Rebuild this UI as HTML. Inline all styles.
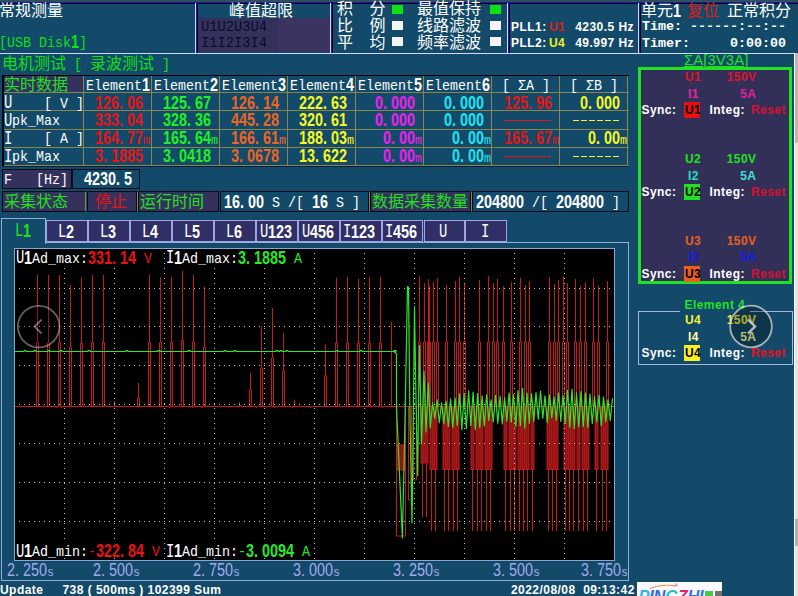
<!DOCTYPE html>
<html lang="zh"><head><meta charset="utf-8"><title>Power Analyzer</title>
<style>
html,body{margin:0;padding:0;background:#134a69;}
#scr{position:relative;width:798px;height:596px;overflow:hidden;background:#134a69;}
#scr div{position:absolute;}
.w{position:absolute;display:block;width:0;height:16px;}
.t{position:absolute;top:0;white-space:pre;line-height:16px;height:16px;transform-origin:0 0;}
.c{font-family:"Liberation Sans","Noto Sans CJK SC",sans-serif;font-size:16px;}
.d{font-family:"Liberation Sans",sans-serif;font-size:18px;font-weight:bold;transform:scaleX(.8);}
.k{font-family:"Liberation Mono",monospace;font-size:20px;transform:scaleX(.69);margin-top:.5px;}
.dn{font-family:"Liberation Sans",sans-serif;font-size:18px;transform:scaleX(.8);}
.m{font-family:"Liberation Mono",monospace;font-size:15px;transform:scaleX(.889);margin-top:2px;}
.u{font-family:"Liberation Mono",monospace;font-size:13px;transform:scaleX(.9);margin-top:2.8px;}
.u2{font-family:"Liberation Mono",monospace;font-size:15px;transform:scaleX(.889);margin-top:2px;}
.cn{position:absolute;white-space:pre;font-family:"Liberation Mono",monospace;font-size:13.75px;line-height:16px;color:#0a0a2c;}
.cb{position:absolute;white-space:pre;font-family:"Liberation Mono",monospace;font-weight:bold;font-size:13.33px;line-height:16px;color:#fff;}
.a{position:absolute;white-space:pre;font-family:"Liberation Sans",sans-serif;line-height:14px;letter-spacing:.45px;}
</style></head>
<body><div id="scr">
<div style="left:0px;top:0px;width:798px;height:2px;background:#2c4f63;"></div>
<div style="left:-2px;top:2px;width:198px;height:1px;background:#1818b0;"></div>
<div style="left:-1px;top:3px;width:197px;height:1px;background:#00000c;"></div>
<div style="left:-2px;top:2px;width:1px;height:52px;background:#1818b0;"></div>
<div style="left:-1px;top:3px;width:1px;height:50px;background:#00000c;"></div>
<div style="left:-2px;top:53px;width:198px;height:1px;background:#d0dcff;"></div>
<div style="left:195px;top:3px;width:1px;height:51px;background:#d0dcff;"></div>
<div style="left:196px;top:2px;width:135px;height:1px;background:#1818b0;"></div>
<div style="left:197px;top:3px;width:134px;height:1px;background:#00000c;"></div>
<div style="left:196px;top:2px;width:1px;height:52px;background:#1818b0;"></div>
<div style="left:197px;top:3px;width:1px;height:50px;background:#00000c;"></div>
<div style="left:196px;top:53px;width:135px;height:1px;background:#d0dcff;"></div>
<div style="left:330px;top:3px;width:1px;height:51px;background:#d0dcff;"></div>
<div style="left:331px;top:2px;width:177px;height:1px;background:#1818b0;"></div>
<div style="left:332px;top:3px;width:176px;height:1px;background:#00000c;"></div>
<div style="left:331px;top:2px;width:1px;height:52px;background:#1818b0;"></div>
<div style="left:332px;top:3px;width:1px;height:50px;background:#00000c;"></div>
<div style="left:331px;top:53px;width:177px;height:1px;background:#d0dcff;"></div>
<div style="left:507px;top:3px;width:1px;height:51px;background:#d0dcff;"></div>
<div style="left:508px;top:2px;width:131px;height:1px;background:#1818b0;"></div>
<div style="left:509px;top:3px;width:130px;height:1px;background:#00000c;"></div>
<div style="left:508px;top:2px;width:1px;height:52px;background:#1818b0;"></div>
<div style="left:509px;top:3px;width:1px;height:50px;background:#00000c;"></div>
<div style="left:508px;top:53px;width:131px;height:1px;background:#d0dcff;"></div>
<div style="left:638px;top:3px;width:1px;height:51px;background:#d0dcff;"></div>
<div style="left:639px;top:2px;width:162px;height:1px;background:#1818b0;"></div>
<div style="left:640px;top:3px;width:161px;height:1px;background:#00000c;"></div>
<div style="left:639px;top:2px;width:1px;height:52px;background:#1818b0;"></div>
<div style="left:640px;top:3px;width:1px;height:50px;background:#00000c;"></div>
<div style="left:639px;top:53px;width:162px;height:1px;background:#d0dcff;"></div>
<div style="left:800px;top:3px;width:1px;height:51px;background:#d0dcff;"></div>
<span class="w" style="left:-1px;top:3px;color:#ffffff"><span class="t c" style="left:0px">常规测量</span></span>
<span class="w" style="left:-1.5px;top:34px;color:#10e010"><span class="t m" style="left:0px">[USB </span><span class="t m" style="left:40px">Disk</span><span class="t d" style="left:72px">1</span><span class="t m" style="left:80px">]</span></span>
<span class="w" style="left:2px;top:55.5px;color:#10e010"><span class="t c" style="left:0px">电机测试 </span><span class="t m" style="left:72px">[ </span><span class="t c" style="left:88px">录波测试 </span><span class="t m" style="left:160px">]</span></span>
<span class="w" style="left:229px;top:2.5px;color:#ffffff"><span class="t c" style="left:0px">峰值超限</span></span>
<div style="left:198px;top:18px;width:132px;height:34px;background:#34325c;"></div>
<div style="left:278px;top:18px;width:52px;height:34px;background:#3c3460;"></div>
<span class="cn" style="left:201px;top:20px;">U1U2U3U4</span>
<span class="cn" style="left:201px;top:36px;">I1I2I3I4</span>
<span class="w" style="left:337px;top:1.2px;color:#ffffff"><span class="t c" style="left:0px">积</span></span>
<span class="w" style="left:369.5px;top:1.2px;color:#ffffff"><span class="t c" style="left:0px">分</span></span>
<span class="w" style="left:417px;top:1.2px;color:#ffffff"><span class="t c" style="left:0px">最值保持</span></span>
<span class="w" style="left:337px;top:17.9px;color:#ffffff"><span class="t c" style="left:0px">比</span></span>
<span class="w" style="left:369.5px;top:17.9px;color:#ffffff"><span class="t c" style="left:0px">例</span></span>
<span class="w" style="left:417px;top:17.9px;color:#ffffff"><span class="t c" style="left:0px">线路滤波</span></span>
<span class="w" style="left:337px;top:35.4px;color:#ffffff"><span class="t c" style="left:0px">平</span></span>
<span class="w" style="left:369.5px;top:35.4px;color:#ffffff"><span class="t c" style="left:0px">均</span></span>
<span class="w" style="left:417px;top:35.4px;color:#ffffff"><span class="t c" style="left:0px">频率滤波</span></span>
<div style="left:392px;top:4.5px;width:11px;height:9px;background:#10e010;"></div>
<div style="left:392px;top:21px;width:11px;height:9px;background:#f4f4f4;"></div>
<div style="left:392px;top:37px;width:11px;height:9px;background:#f4f4f4;"></div>
<div style="left:490px;top:4.5px;width:11px;height:9px;background:#10e010;"></div>
<div style="left:490px;top:21px;width:11px;height:9px;background:#f4f4f4;"></div>
<div style="left:490px;top:37px;width:11px;height:9px;background:#f4f4f4;"></div>
<span class="a" style="left:511px;top:20px;color:#ffffff;font-size:12px;font-weight:bold;">PLL1:</span>
<span class="a" style="left:549px;top:20px;color:#e01818;font-size:12px;font-weight:bold;">U1</span>
<span class="a" style="right:164px;top:20px;color:#ffffff;font-size:12px;font-weight:bold;">4230.5 Hz</span>
<span class="a" style="left:511px;top:36px;color:#ffffff;font-size:12px;font-weight:bold;">PLL2:</span>
<span class="a" style="left:549px;top:36px;color:#f0f020;font-size:12px;font-weight:bold;">U4</span>
<span class="a" style="right:164px;top:36px;color:#ffffff;font-size:12px;font-weight:bold;">49.997 Hz</span>
<span class="w" style="left:641px;top:3px;color:#ffffff"><span class="t c" style="left:0px">单元</span><span class="t d" style="left:32px">1</span></span>
<span class="w" style="left:687px;top:3px;color:#e01818"><span class="t c" style="left:0px">复位</span></span>
<span class="w" style="left:727px;top:3px;color:#ffffff"><span class="t c" style="left:0px">正常积分</span></span>
<span class="cb" style="left:642px;top:19px;">Time: ------:--:--</span>
<span class="cb" style="left:642px;top:36px;">Timer:     0:00:00</span>
<div style="left:3px;top:76px;width:80px;height:17px;background:#34325c;"></div>
<div style="left:3px;top:92.2px;width:625.5px;height:1px;background:#86864e;"></div>
<div style="left:3px;top:110.3px;width:625.5px;height:1px;background:#86864e;"></div>
<div style="left:3px;top:128.5px;width:625.5px;height:1px;background:#86864e;"></div>
<div style="left:3px;top:146.7px;width:625.5px;height:1px;background:#86864e;"></div>
<div style="left:3px;top:165.2px;width:625.5px;height:1px;background:#86864e;"></div>
<div style="left:82.5px;top:76px;width:1px;height:90px;background:#86864e;"></div>
<div style="left:150.6px;top:76px;width:1px;height:90px;background:#86864e;"></div>
<div style="left:218.7px;top:76px;width:1px;height:90px;background:#86864e;"></div>
<div style="left:286.8px;top:76px;width:1px;height:90px;background:#86864e;"></div>
<div style="left:354.9px;top:76px;width:1px;height:90px;background:#86864e;"></div>
<div style="left:423.0px;top:76px;width:1px;height:90px;background:#86864e;"></div>
<div style="left:491.1px;top:76px;width:1px;height:90px;background:#86864e;"></div>
<div style="left:559.2px;top:76px;width:1px;height:90px;background:#86864e;"></div>
<div style="left:627.3px;top:76px;width:1px;height:90px;background:#86864e;"></div>
<div style="left:2px;top:74.5px;width:626.5px;height:1.5px;background:#00000c;"></div>
<div style="left:2px;top:166.2px;width:626.5px;height:1px;background:#0c1c30;"></div>
<div style="left:2px;top:74.5px;width:1.5px;height:91.80000000000001px;background:#00000c;"></div>
<span class="w" style="left:4px;top:76.5px;color:#20e020"><span class="t c" style="left:0px">实时数据</span></span>
<span class="w" style="left:85.5px;top:76.5px;color:#ffffff"><span class="t m" style="left:0px">Element</span><span class="t d" style="left:56px">1</span></span>
<span class="w" style="left:153.6px;top:76.5px;color:#ffffff"><span class="t m" style="left:0px">Element</span><span class="t d" style="left:56px">2</span></span>
<span class="w" style="left:221.7px;top:76.5px;color:#ffffff"><span class="t m" style="left:0px">Element</span><span class="t d" style="left:56px">3</span></span>
<span class="w" style="left:289.8px;top:76.5px;color:#ffffff"><span class="t m" style="left:0px">Element</span><span class="t d" style="left:56px">4</span></span>
<span class="w" style="left:357.9px;top:76.5px;color:#ffffff"><span class="t m" style="left:0px">Element</span><span class="t d" style="left:56px">5</span></span>
<span class="w" style="left:426.0px;top:76.5px;color:#ffffff"><span class="t m" style="left:0px">Element</span><span class="t d" style="left:56px">6</span></span>
<span class="w" style="left:494.1px;top:76.5px;color:#ffffff"><span class="t m" style="left:0px"> </span><span class="t m" style="left:8px">[ </span><span class="t m" style="left:24px">ΣA </span><span class="t m" style="left:48px">]</span></span>
<span class="w" style="left:562.2px;top:76.5px;color:#ffffff"><span class="t m" style="left:0px"> </span><span class="t m" style="left:8px">[ </span><span class="t m" style="left:24px">ΣB </span><span class="t m" style="left:48px">]</span></span>
<span class="w" style="left:4px;top:94.6px;color:#ffffff"><span class="t k" style="left:0px">U    </span><span class="t m" style="left:40px">[ </span><span class="t m" style="left:56px">V </span><span class="t m" style="left:72px">]</span></span>
<span class="w" style="left:4px;top:112px;color:#ffffff"><span class="t k" style="left:0px">U</span><span class="t m" style="left:8px">pk_Max</span></span>
<span class="w" style="left:4px;top:130px;color:#ffffff"><span class="t k" style="left:0px">I    </span><span class="t m" style="left:40px">[ </span><span class="t m" style="left:56px">A </span><span class="t m" style="left:72px">]</span></span>
<span class="w" style="left:4px;top:148.2px;color:#ffffff"><span class="t k" style="left:0px">I</span><span class="t m" style="left:8px">pk_Max</span></span>
<span class="w" style="left:95.0px;top:94.6px;color:#e81414"><span class="t d" style="left:0px">126.</span><span class="t d" style="left:32px">06</span></span>
<span class="w" style="left:163.1px;top:94.6px;color:#20f020"><span class="t d" style="left:0px">125.</span><span class="t d" style="left:32px">67</span></span>
<span class="w" style="left:231.2px;top:94.6px;color:#f06422"><span class="t d" style="left:0px">126.</span><span class="t d" style="left:32px">14</span></span>
<span class="w" style="left:299.3px;top:94.6px;color:#f8f820"><span class="t d" style="left:0px">222.</span><span class="t d" style="left:32px">63</span></span>
<span class="w" style="left:375.4px;top:94.6px;color:#f020f0"><span class="t d" style="left:0px">0.</span><span class="t d" style="left:16px">000</span></span>
<span class="w" style="left:443.5px;top:94.6px;color:#20e4f4"><span class="t d" style="left:0px">0.</span><span class="t d" style="left:16px">000</span></span>
<span class="w" style="left:503.6px;top:94.6px;color:#e81414"><span class="t d" style="left:0px">125.</span><span class="t d" style="left:32px">96</span></span>
<span class="w" style="left:579.7px;top:94.6px;color:#f8f820"><span class="t d" style="left:0px">0.</span><span class="t d" style="left:16px">000</span></span>
<span class="w" style="left:95.0px;top:112px;color:#e81414"><span class="t d" style="left:0px">333.</span><span class="t d" style="left:32px">04</span></span>
<span class="w" style="left:163.1px;top:112px;color:#20f020"><span class="t d" style="left:0px">328.</span><span class="t d" style="left:32px">36</span></span>
<span class="w" style="left:231.2px;top:112px;color:#f06422"><span class="t d" style="left:0px">445.</span><span class="t d" style="left:32px">28</span></span>
<span class="w" style="left:299.3px;top:112px;color:#f8f820"><span class="t d" style="left:0px">320.</span><span class="t d" style="left:32px">61</span></span>
<span class="w" style="left:375.4px;top:112px;color:#f020f0"><span class="t d" style="left:0px">0.</span><span class="t d" style="left:16px">000</span></span>
<span class="w" style="left:443.5px;top:112px;color:#20e4f4"><span class="t d" style="left:0px">0.</span><span class="t d" style="left:16px">000</span></span>
<div style="left:503.6px;top:120px;width:47px;height:1px;background:#e81414;"></div>
<span class="t m" style="left:503.6px;top:112px;color:transparent">------</span>
<div style="left:572.7px;top:120px;width:6px;height:1px;background:#f8f820;"></div>
<div style="left:580.7px;top:120px;width:6px;height:1px;background:#f8f820;"></div>
<div style="left:588.7px;top:120px;width:6px;height:1px;background:#f8f820;"></div>
<div style="left:596.7px;top:120px;width:6px;height:1px;background:#f8f820;"></div>
<div style="left:604.7px;top:120px;width:6px;height:1px;background:#f8f820;"></div>
<div style="left:612.7px;top:120px;width:6px;height:1px;background:#f8f820;"></div>
<span class="t m" style="left:571.7px;top:112px;color:transparent">------</span>
<span class="w" style="left:95.0px;top:130px;color:#e81414"><span class="t d" style="left:0px">164.</span><span class="t d" style="left:32px">77</span></span>
<span class="t u" style="left:143.0px;top:130px;color:#e81414">m</span>
<span class="w" style="left:163.1px;top:130px;color:#20f020"><span class="t d" style="left:0px">165.</span><span class="t d" style="left:32px">64</span></span>
<span class="t u" style="left:211.1px;top:130px;color:#20f020">m</span>
<span class="w" style="left:231.2px;top:130px;color:#f06422"><span class="t d" style="left:0px">166.</span><span class="t d" style="left:32px">61</span></span>
<span class="t u" style="left:279.2px;top:130px;color:#f06422">m</span>
<span class="w" style="left:299.3px;top:130px;color:#f8f820"><span class="t d" style="left:0px">188.</span><span class="t d" style="left:32px">03</span></span>
<span class="t u" style="left:347.3px;top:130px;color:#f8f820">m</span>
<span class="w" style="left:383.4px;top:130px;color:#f020f0"><span class="t d" style="left:0px">0.</span><span class="t d" style="left:16px">00</span></span>
<span class="t u" style="left:415.4px;top:130px;color:#f020f0">m</span>
<span class="w" style="left:451.5px;top:130px;color:#20e4f4"><span class="t d" style="left:0px">0.</span><span class="t d" style="left:16px">00</span></span>
<span class="t u" style="left:483.5px;top:130px;color:#20e4f4">m</span>
<span class="w" style="left:503.6px;top:130px;color:#e81414"><span class="t d" style="left:0px">165.</span><span class="t d" style="left:32px">67</span></span>
<span class="t u" style="left:551.6px;top:130px;color:#e81414">m</span>
<span class="w" style="left:587.7px;top:130px;color:#f8f820"><span class="t d" style="left:0px">0.</span><span class="t d" style="left:16px">00</span></span>
<span class="t u" style="left:619.7px;top:130px;color:#f8f820">m</span>
<span class="w" style="left:95.0px;top:148.2px;color:#e81414"><span class="t d" style="left:0px">3.</span><span class="t d" style="left:16px">1885</span></span>
<span class="w" style="left:163.1px;top:148.2px;color:#20f020"><span class="t d" style="left:0px">3.</span><span class="t d" style="left:16px">0418</span></span>
<span class="w" style="left:231.2px;top:148.2px;color:#f06422"><span class="t d" style="left:0px">3.</span><span class="t d" style="left:16px">0678</span></span>
<span class="w" style="left:299.3px;top:148.2px;color:#f8f820"><span class="t d" style="left:0px">13.</span><span class="t d" style="left:24px">622</span></span>
<span class="w" style="left:383.4px;top:148.2px;color:#f020f0"><span class="t d" style="left:0px">0.</span><span class="t d" style="left:16px">00</span></span>
<span class="t u" style="left:415.4px;top:148.2px;color:#f020f0">m</span>
<span class="w" style="left:451.5px;top:148.2px;color:#20e4f4"><span class="t d" style="left:0px">0.</span><span class="t d" style="left:16px">00</span></span>
<span class="t u" style="left:483.5px;top:148.2px;color:#20e4f4">m</span>
<div style="left:503.6px;top:156.2px;width:47px;height:1px;background:#e81414;"></div>
<span class="t m" style="left:503.6px;top:148.2px;color:transparent">------</span>
<div style="left:572.7px;top:156.2px;width:6px;height:1px;background:#f8f820;"></div>
<div style="left:580.7px;top:156.2px;width:6px;height:1px;background:#f8f820;"></div>
<div style="left:588.7px;top:156.2px;width:6px;height:1px;background:#f8f820;"></div>
<div style="left:596.7px;top:156.2px;width:6px;height:1px;background:#f8f820;"></div>
<div style="left:604.7px;top:156.2px;width:6px;height:1px;background:#f8f820;"></div>
<div style="left:612.7px;top:156.2px;width:6px;height:1px;background:#f8f820;"></div>
<span class="t m" style="left:571.7px;top:148.2px;color:transparent">------</span>
<div style="left:2px;top:169px;width:69.5px;height:19.5px;background:#050c18;"></div>
<div style="left:3px;top:170px;width:67.5px;height:17.5px;background:#34325c;"></div>
<div style="left:71.5px;top:169px;width:68px;height:19.5px;background:#050c18;"></div>
<div style="left:72.5px;top:170px;width:66px;height:17.5px;background:#134a69;"></div>
<span class="w" style="left:4px;top:171px;color:#ffffff"><span class="t m" style="left:0px">F   </span><span class="t m" style="left:32px">[Hz]</span></span>
<span class="w" style="left:84px;top:171px;color:#ffffff"><span class="t d" style="left:0px">4230.</span><span class="t d" style="left:40px">5</span></span>
<div style="left:2px;top:191px;width:83.5px;height:20.5px;background:#050c18;"></div>
<div style="left:3px;top:192px;width:81.5px;height:18.5px;background:#34325c;"></div>
<div style="left:86.5px;top:191px;width:50.5px;height:20.5px;background:#050c18;"></div>
<div style="left:87.5px;top:192px;width:48.5px;height:18.5px;background:#34325c;"></div>
<div style="left:138px;top:191px;width:80.5px;height:20.5px;background:#050c18;"></div>
<div style="left:139px;top:192px;width:78.5px;height:18.5px;background:#34325c;"></div>
<div style="left:219.5px;top:191px;width:149px;height:20.5px;background:#050c18;"></div>
<div style="left:220.5px;top:192px;width:147px;height:18.5px;background:#134a69;"></div>
<div style="left:369.5px;top:191px;width:101px;height:20.5px;background:#050c18;"></div>
<div style="left:370.5px;top:192px;width:99px;height:18.5px;background:#34325c;"></div>
<div style="left:471.5px;top:191px;width:157px;height:20.5px;background:#050c18;"></div>
<div style="left:472.5px;top:192px;width:155px;height:18.5px;background:#134a69;"></div>
<div style="left:85.3px;top:192px;width:1px;height:19px;background:#86864e;"></div>
<div style="left:137px;top:192px;width:1px;height:19px;background:#86864e;"></div>
<div style="left:368.7px;top:192px;width:1px;height:19px;background:#86864e;"></div>
<div style="left:470.5px;top:192px;width:1px;height:19px;background:#86864e;"></div>
<span class="w" style="left:4px;top:193.5px;color:#20e020"><span class="t c" style="left:0px">采集状态</span></span>
<span class="w" style="left:95px;top:193.5px;color:#e81414"><span class="t c" style="left:0px">停止</span></span>
<span class="w" style="left:140px;top:193.5px;color:#20e020"><span class="t c" style="left:0px">运行时间</span></span>
<span class="w" style="left:224px;top:193.5px;color:#ffffff"><span class="t d" style="left:0px">16.</span><span class="t d" style="left:24px">00 </span><span class="t m" style="left:48px">S </span><span class="t m" style="left:64px">/[ </span><span class="t d" style="left:88px">16 </span><span class="t m" style="left:112px">S </span><span class="t m" style="left:128px">]</span></span>
<span class="w" style="left:372px;top:193.5px;color:#20e020"><span class="t c" style="left:0px">数据采集数量</span></span>
<span class="w" style="left:476px;top:193.5px;color:#ffffff"><span class="t d" style="left:0px">204800 </span><span class="t m" style="left:56px">/[ </span><span class="t d" style="left:80px">204800 </span><span class="t m" style="left:136px">]</span></span>
<div style="left:1px;top:242px;width:628px;height:338.5px;background:#8fb0dc;"></div>
<div style="left:2px;top:243px;width:626px;height:336.5px;background:#134a69;"></div>
<div style="left:1px;top:218px;width:45.4px;height:26px;background:#8fb0dc;"></div>
<div style="left:2px;top:219px;width:43.4px;height:26px;background:#134a69;"></div>
<span class="w" style="left:14.5px;top:222.5px;color:#20e020"><span class="t k" style="left:0px">L</span><span class="t d" style="left:8px">1</span></span>
<div style="left:46.4px;top:220px;width:41.9px;height:22px;background:#a0a4e6;"></div>
<div style="left:47.4px;top:221px;width:39.9px;height:20px;background:#313066;"></div>
<span class="w" style="left:58.1px;top:223.5px;color:#ffffff"><span class="t k" style="left:0px">L</span><span class="t d" style="left:8px">2</span></span>
<div style="left:88.3px;top:220px;width:41.89999999999999px;height:22px;background:#a0a4e6;"></div>
<div style="left:89.3px;top:221px;width:39.89999999999999px;height:20px;background:#313066;"></div>
<span class="w" style="left:100.0px;top:223.5px;color:#ffffff"><span class="t k" style="left:0px">L</span><span class="t d" style="left:8px">3</span></span>
<div style="left:130.2px;top:220px;width:41.900000000000006px;height:22px;background:#a0a4e6;"></div>
<div style="left:131.2px;top:221px;width:39.900000000000006px;height:20px;background:#313066;"></div>
<span class="w" style="left:141.9px;top:223.5px;color:#ffffff"><span class="t k" style="left:0px">L</span><span class="t d" style="left:8px">4</span></span>
<div style="left:172.1px;top:220px;width:41.900000000000006px;height:22px;background:#a0a4e6;"></div>
<div style="left:173.1px;top:221px;width:39.900000000000006px;height:20px;background:#313066;"></div>
<span class="w" style="left:183.9px;top:223.5px;color:#ffffff"><span class="t k" style="left:0px">L</span><span class="t d" style="left:8px">5</span></span>
<div style="left:214.0px;top:220px;width:41.900000000000006px;height:22px;background:#a0a4e6;"></div>
<div style="left:215.0px;top:221px;width:39.900000000000006px;height:20px;background:#313066;"></div>
<span class="w" style="left:225.8px;top:223.5px;color:#ffffff"><span class="t k" style="left:0px">L</span><span class="t d" style="left:8px">6</span></span>
<div style="left:255.9px;top:220px;width:41.900000000000006px;height:22px;background:#a0a4e6;"></div>
<div style="left:256.9px;top:221px;width:39.900000000000006px;height:20px;background:#313066;"></div>
<span class="w" style="left:259.7px;top:223.5px;color:#ffffff"><span class="t k" style="left:0px">U</span><span class="t d" style="left:8px">123</span></span>
<div style="left:297.8px;top:220px;width:41.89999999999998px;height:22px;background:#a0a4e6;"></div>
<div style="left:298.8px;top:221px;width:39.89999999999998px;height:20px;background:#313066;"></div>
<span class="w" style="left:301.6px;top:223.5px;color:#ffffff"><span class="t k" style="left:0px">U</span><span class="t d" style="left:8px">456</span></span>
<div style="left:339.7px;top:220px;width:41.900000000000034px;height:22px;background:#a0a4e6;"></div>
<div style="left:340.7px;top:221px;width:39.900000000000034px;height:20px;background:#313066;"></div>
<span class="w" style="left:343.4px;top:223.5px;color:#ffffff"><span class="t k" style="left:0px">I</span><span class="t d" style="left:8px">123</span></span>
<div style="left:381.6px;top:220px;width:41.89999999999998px;height:22px;background:#a0a4e6;"></div>
<div style="left:382.6px;top:221px;width:39.89999999999998px;height:20px;background:#313066;"></div>
<span class="w" style="left:385.4px;top:223.5px;color:#ffffff"><span class="t k" style="left:0px">I</span><span class="t d" style="left:8px">456</span></span>
<div style="left:423.5px;top:220px;width:41.89999999999998px;height:22px;background:#a0a4e6;"></div>
<div style="left:424.5px;top:221px;width:39.89999999999998px;height:20px;background:#313066;"></div>
<span class="w" style="left:439.2px;top:223.5px;color:#ffffff"><span class="t k" style="left:0px">U</span></span>
<div style="left:465.4px;top:220px;width:41.900000000000034px;height:22px;background:#a0a4e6;"></div>
<div style="left:466.4px;top:221px;width:39.900000000000034px;height:20px;background:#313066;"></div>
<span class="w" style="left:481.2px;top:223.5px;color:#ffffff"><span class="t k" style="left:0px">I</span></span>
<div style="left:14px;top:248px;width:601px;height:313px;background:#84a8d8;"></div>
<div style="left:15px;top:249px;width:599px;height:311px;background:#000000;"></div>
<svg style="position:absolute;left:0;top:0" width="798" height="596" viewBox="0 0 798 596"><defs><clipPath id="cp"><rect x="15" y="249" width="599" height="311"/></clipPath></defs><g clip-path="url(#cp)"><rect x="397.0" y="445.0" width="8" height="25.0" fill="#8c1414" stroke="#c41c1c" stroke-width="1"/><rect x="421.0" y="406.5" width="3" height="56.5" fill="#8c1414" stroke="#c41c1c" stroke-width="1"/><rect x="425.0" y="406.5" width="3" height="56.5" fill="#8c1414" stroke="#c41c1c" stroke-width="1"/><rect x="430.0" y="406.5" width="3" height="63.0" fill="#8c1414" stroke="#c41c1c" stroke-width="1"/><rect x="434.0" y="406.5" width="3" height="63.0" fill="#8c1414" stroke="#c41c1c" stroke-width="1"/><rect x="443.0" y="406.5" width="3" height="63.0" fill="#8c1414" stroke="#c41c1c" stroke-width="1"/><rect x="447.0" y="406.5" width="3" height="63.0" fill="#8c1414" stroke="#c41c1c" stroke-width="1"/><rect x="452.0" y="406.5" width="3" height="63.0" fill="#8c1414" stroke="#c41c1c" stroke-width="1"/><rect x="456.0" y="406.5" width="3" height="63.0" fill="#8c1414" stroke="#c41c1c" stroke-width="1"/><rect x="471.0" y="406.5" width="3" height="63.0" fill="#8c1414" stroke="#c41c1c" stroke-width="1"/><rect x="476.0" y="406.5" width="3" height="63.0" fill="#8c1414" stroke="#c41c1c" stroke-width="1"/><rect x="480.0" y="406.5" width="3" height="63.0" fill="#8c1414" stroke="#c41c1c" stroke-width="1"/><rect x="485.0" y="406.5" width="3" height="63.0" fill="#8c1414" stroke="#c41c1c" stroke-width="1"/><rect x="489.0" y="406.5" width="3" height="63.0" fill="#8c1414" stroke="#c41c1c" stroke-width="1"/><rect x="504.0" y="406.5" width="3" height="63.0" fill="#8c1414" stroke="#c41c1c" stroke-width="1"/><rect x="509.0" y="406.5" width="3" height="63.0" fill="#8c1414" stroke="#c41c1c" stroke-width="1"/><rect x="513.0" y="406.5" width="3" height="63.0" fill="#8c1414" stroke="#c41c1c" stroke-width="1"/><rect x="518.0" y="406.5" width="3" height="63.0" fill="#8c1414" stroke="#c41c1c" stroke-width="1"/><rect x="522.0" y="406.5" width="3" height="63.0" fill="#8c1414" stroke="#c41c1c" stroke-width="1"/><rect x="526.0" y="406.5" width="3" height="63.0" fill="#8c1414" stroke="#c41c1c" stroke-width="1"/><rect x="531.0" y="406.5" width="3" height="63.0" fill="#8c1414" stroke="#c41c1c" stroke-width="1"/><rect x="547.0" y="406.5" width="3" height="63.0" fill="#8c1414" stroke="#c41c1c" stroke-width="1"/><rect x="551.0" y="406.5" width="3" height="63.0" fill="#8c1414" stroke="#c41c1c" stroke-width="1"/><rect x="555.0" y="406.5" width="3" height="63.0" fill="#8c1414" stroke="#c41c1c" stroke-width="1"/><rect x="564.0" y="406.5" width="3" height="63.0" fill="#8c1414" stroke="#c41c1c" stroke-width="1"/><rect x="568.0" y="406.5" width="3" height="63.0" fill="#8c1414" stroke="#c41c1c" stroke-width="1"/><rect x="572.0" y="406.5" width="3" height="63.0" fill="#8c1414" stroke="#c41c1c" stroke-width="1"/><rect x="577.0" y="406.5" width="3" height="63.0" fill="#8c1414" stroke="#c41c1c" stroke-width="1"/><rect x="582.0" y="406.5" width="3" height="63.0" fill="#8c1414" stroke="#c41c1c" stroke-width="1"/><rect x="586.0" y="406.5" width="3" height="63.0" fill="#8c1414" stroke="#c41c1c" stroke-width="1"/><rect x="595.0" y="406.5" width="3" height="63.0" fill="#8c1414" stroke="#c41c1c" stroke-width="1"/><rect x="601.0" y="406.5" width="3" height="63.0" fill="#8c1414" stroke="#c41c1c" stroke-width="1"/><rect x="605.0" y="406.5" width="3" height="63.0" fill="#8c1414" stroke="#c41c1c" stroke-width="1"/><path d="M37.5 275.0V342.5M36.5 406.5V342.5H38.5V406.5M48.5 275.0V342.5M47.5 406.5V342.5H49.5V406.5M59.5 275.0V342.5M58.5 406.5V342.5H60.5V406.5M70.5 285.0V347.0M69.5 406.5V347.0H71.5V406.5M81.5 277.6V343.0M80.5 406.5V343.0H82.5V406.5M92.5 275.0V342.5M91.5 406.5V342.5H93.5V406.5M103.5 275.0V342.5M102.5 406.5V342.5H104.5V406.5M114.5 401.0V406.5M138.5 383.0V398.0M137.5 406.5V398.0H139.5V406.5M149.5 275.0V342.5M148.5 406.5V342.5H150.5V406.5M160.5 277.0V342.5M159.5 406.5V342.5H161.5V406.5M171.5 277.0V342.5M170.5 406.5V342.5H172.5V406.5M182.5 271.0V340.5M181.5 406.5V340.5H183.5V406.5M193.5 275.0V342.5M192.5 406.5V342.5H194.5V406.5M204.5 286.4V347.0M203.5 406.5V347.0H205.5V406.5M239.5 402.0V406.5M250.5 373.0V389.6M249.5 406.5V389.6H251.5V406.5M261.5 326.7V368.0M260.5 406.5V368.0H262.5V406.5M272.5 307.8V358.0M271.5 406.5V358.0H273.5V406.5M283.5 333.0V370.7M282.5 406.5V370.7H284.5V406.5M294.5 399.6V406.5M325.5 344.3V375.7M324.5 406.5V375.7H326.5V406.5M336.5 277.6V343.0M335.5 406.5V343.0H337.5V406.5M347.5 277.0V343.0M346.5 406.5V343.0H348.5V406.5M358.5 279.0V343.0M357.5 406.5V343.0H359.5V406.5M369.5 277.0V343.0M368.5 406.5V343.0H370.5V406.5M380.5 277.0V343.0M379.5 406.5V343.0H381.5V406.5M391.5 321.6V406.5M14 406.5H23H34H39H44H49H56v1h1v0V406.5H61v1h1v0V406.5H66H71H82v-1h1v0V406.5H89v-1h1v0V406.5H98H105v-1h1v0V406.5H110H115H122H133H144H155H162H169v1h1v0V406.5H178H187H192v1h1v0V406.5H201v1h1v0V406.5H206H211H220H229H240v-1h1v0V406.5H251H256v1h1v0V406.5H265H274v1h1v0V406.5H281H292v1h1v0V406.5H299H310v1h1v0V406.5H319H330H339H348H359H366v-1h1v0V406.5H373v-1h1v0V406.5H382v1h1v0V406.5H391H396H407H615M396.5 406.5V536H405.5V406.5M408.5 406.5V500H411.5V406.5M413.5 406.5V480H416.5V406.5M419.5 276.0V342.0M418.5 406.5V342H420.5V406.5M424.5 283.0V342.0M423.5 406.5V342H425.5V406.5M428.5 279.0V342.0M427.5 406.5V342H429.5V406.5M429.5 286.0V342.0M428.5 406.5V342H430.5V406.5M433.5 282.0V342.0M432.5 406.5V342H434.5V406.5M437.5 278.0V342.0M436.5 406.5V342H438.5V406.5M446.5 285.0V342.0M445.5 406.5V342H447.5V406.5M455.5 281.0V342.0M454.5 406.5V342H456.5V406.5M459.5 277.0V342.0M458.5 406.5V342H460.5V406.5M464.5 284.0V342.0M463.5 406.5V342H465.5V406.5M479.5 280.0V342.0M478.5 406.5V342H480.5V406.5M488.5 276.0V342.0M487.5 406.5V342H489.5V406.5M493.5 283.0V342.0M492.5 406.5V342H494.5V406.5M497.5 279.0V342.0M496.5 406.5V342H498.5V406.5M503.5 286.0V342.0M502.5 406.5V342H504.5V406.5M511.5 282.0V342.0M510.5 406.5V342H512.5V406.5M520.5 278.0V342.0M519.5 406.5V342H521.5V406.5M525.5 285.0V342.0M524.5 406.5V342H526.5V406.5M529.5 281.0V342.0M528.5 406.5V342H530.5V406.5M549.5 277.0V342.0M548.5 406.5V342H550.5V406.5M554.5 284.0V342.0M553.5 406.5V342H555.5V406.5M558.5 280.0V342.0M557.5 406.5V342H559.5V406.5M563.5 276.0V342.0M562.5 406.5V342H564.5V406.5M567.5 283.0V342.0M566.5 406.5V342H568.5V406.5M575.5 279.0V342.0M574.5 406.5V342H576.5V406.5M580.5 286.0V342.0M579.5 406.5V342H581.5V406.5M585.5 282.0V342.0M584.5 406.5V342H586.5V406.5M593.5 278.0V342.0M592.5 406.5V342H594.5V406.5M598.5 285.0V342.0M597.5 406.5V342H599.5V406.5M607.5 281.0V342.0M606.5 406.5V342H608.5V406.5M422.5 463.0V517.0M426.5 463.0V517.0M431.5 469.5V531.0M435.5 469.5V531.0M444.5 469.5V531.0M448.5 469.5V531.0M453.5 469.5V531.0M457.5 469.5V531.0M472.5 469.5V531.0M477.5 469.5V531.0M481.5 469.5V531.0M486.5 469.5V531.0M490.5 469.5V531.0M505.5 469.5V531.0M510.5 469.5V531.0M514.5 469.5V531.0M519.5 469.5V531.0M523.5 469.5V531.0M527.5 469.5V531.0M532.5 469.5V531.0M548.5 469.5V531.0M552.5 469.5V531.0M556.5 469.5V531.0M565.5 469.5V531.0M569.5 469.5V531.0M573.5 469.5V531.0M578.5 469.5V531.0M583.5 469.5V531.0M587.5 469.5V531.0M596.5 469.5V531.0M602.5 469.5V531.0M606.5 469.5V531.0" fill="none" stroke="#c41c1c" stroke-width="1"/><path d="M64.5 248V560" stroke="#c0c0c0" stroke-width="1" stroke-dasharray="1 4" fill="none"/><path d="M114.5 248V560" stroke="#c0c0c0" stroke-width="1" stroke-dasharray="1 4" fill="none"/><path d="M164.5 248V560" stroke="#c0c0c0" stroke-width="1" stroke-dasharray="1 4" fill="none"/><path d="M214.5 248V560" stroke="#c0c0c0" stroke-width="1" stroke-dasharray="1 4" fill="none"/><path d="M264.5 248V560" stroke="#c0c0c0" stroke-width="1" stroke-dasharray="1 4" fill="none"/><path d="M314.5 248V560" stroke="#c0c0c0" stroke-width="1" stroke-dasharray="1 4" fill="none"/><path d="M364.5 248V560" stroke="#c0c0c0" stroke-width="1" stroke-dasharray="1 4" fill="none"/><path d="M414.5 248V560" stroke="#c0c0c0" stroke-width="1" stroke-dasharray="1 4" fill="none"/><path d="M464.5 248V560" stroke="#c0c0c0" stroke-width="1" stroke-dasharray="1 4" fill="none"/><path d="M514.5 248V560" stroke="#c0c0c0" stroke-width="1" stroke-dasharray="1 4" fill="none"/><path d="M564.5 248V560" stroke="#c0c0c0" stroke-width="1" stroke-dasharray="1 4" fill="none"/><path d="M14 288.5H614" stroke="#c0c0c0" stroke-width="1" stroke-dasharray="1 4" fill="none"/><path d="M14 326.5H614" stroke="#c0c0c0" stroke-width="1" stroke-dasharray="1 4" fill="none"/><path d="M14 365.5H614" stroke="#c0c0c0" stroke-width="1" stroke-dasharray="1 4" fill="none"/><path d="M14 404.5H614" stroke="#c0c0c0" stroke-width="1" stroke-dasharray="1 4" fill="none"/><path d="M14 443.5H614" stroke="#c0c0c0" stroke-width="1" stroke-dasharray="1 4" fill="none"/><path d="M14 482.5H614" stroke="#c0c0c0" stroke-width="1" stroke-dasharray="1 4" fill="none"/><path d="M14 521.5H614" stroke="#c0c0c0" stroke-width="1" stroke-dasharray="1 4" fill="none"/><path d="M14 351.5H24v-1h2v1H34v-1h2v1H38H48v-1h2v1H56H60v-1h2v1H66H74H78H88v-1h2v1H96H104H108H118H126v-1h2v1H130H138H144H150H158v-1h2v1H162H170H174H182H188v-1h2v1H194H202H208H218H224v-1h2v1H234v-1h2v1H238H246H252H260H268H276v-1h2v1H280v-1h2v1H286v-1h2v1H296H300H308H312H316H322H328H336v-1h2v1H346H350H356H360v-1h2v1H370H376H386H394v-1h2v1H394 L396.5 354 V407 L402.4 538 L405 420 L407.5 286.5 L408.5 287 L410 420 L412 523 L413.5 400 L414.5 306.5 L416 400 L417.7 475.5 L418.6 400 L419.5 345.6 L421.5 444 L424 371 L426 432 L428.3 383 L430.3 428L432.6 402.5L434.8 418.4L437.1 399.9L439.3 422.8L441.6 402.8L443.8 423.7L446.1 401.0L448.3 426.5L450.6 398.9L452.8 427.5L455.1 398.2L457.3 425.1L459.6 393.9L461.8 429.6L464.1 394.1L466.3 428.7L468.6 390.9L470.8 425.5L473.1 392.0L475.3 429.5L477.6 393.6L479.8 427.5L482.1 395.8L484.3 426.0L486.6 394.7L488.8 420.4L491.1 399.8L493.3 421.9L495.6 395.4L497.8 423.3L500.1 396.2L502.3 423.9L504.6 397.6L506.8 421.1L509.1 393.0L511.3 422.1L513.5 394.7L515.8 426.5L518.0 390.5L520.3 425.9L522.5 388.4L524.8 428.1L527.0 392.8L529.3 423.2L531.5 393.6L533.8 421.3L536.0 392.5L538.3 419.3L540.5 391.2L542.8 418.1L545.0 395.9L547.3 422.7L549.5 394.9L551.8 417.8L554.0 396.9L556.3 420.3L558.5 393.1L560.8 421.5L563.0 395.4L565.3 423.3L567.5 390.4L569.8 427.4L572.0 389.1L574.3 428.6L576.5 392.9L578.8 426.7L581.0 391.7L583.3 426.4L585.5 393.2L587.8 427.5L590.0 394.0L592.3 423.6L594.5 396.4L596.8 421.8L599.0 395.2L601.3 425.7L603.5 397.1L605.8 421.7L608.0 399.9L610.3 420.4L612.5 398.3" fill="none" stroke="#2ce62c" stroke-width="1.2" stroke-linejoin="round"/></g></svg>
<div style="left:15.5px;top:249.5px;width:72px;height:15px;background:#000;"></div>
<span class="w" style="left:15.5px;top:249.5px;color:#ffffff"><span class="t k" style="left:0px">U</span><span class="t d" style="left:8px">1</span><span class="t m" style="left:16px">Ad_max:</span></span>
<div style="left:87.5px;top:249.5px;width:48px;height:15px;background:#000;"></div>
<span class="w" style="left:87.5px;top:249.5px;color:#e81414"><span class="t d" style="left:0px">331.</span><span class="t d" style="left:32px">14</span></span>
<span class="t u2" style="left:143.5px;top:249.5px;color:#e81414">V</span>
<div style="left:166px;top:249.5px;width:72px;height:15px;background:#000;"></div>
<span class="w" style="left:166px;top:249.5px;color:#ffffff"><span class="t k" style="left:0px">I</span><span class="t d" style="left:8px">1</span><span class="t m" style="left:16px">Ad_max:</span></span>
<div style="left:238px;top:249.5px;width:48px;height:15px;background:#000;"></div>
<span class="w" style="left:238px;top:249.5px;color:#2ce62c"><span class="t d" style="left:0px">3.</span><span class="t d" style="left:16px">1885</span></span>
<span class="t u2" style="left:294px;top:249.5px;color:#2ce62c">A</span>
<div style="left:15.5px;top:543px;width:72px;height:15px;background:#000;"></div>
<span class="w" style="left:15.5px;top:543px;color:#ffffff"><span class="t k" style="left:0px">U</span><span class="t d" style="left:8px">1</span><span class="t m" style="left:16px">Ad_min:</span></span>
<div style="left:87.5px;top:543px;width:56px;height:15px;background:#000;"></div>
<span class="w" style="left:87.5px;top:543px;color:#e81414"><span class="t m" style="left:0px">-</span><span class="t d" style="left:8px">322.</span><span class="t d" style="left:40px">84</span></span>
<span class="t u2" style="left:151.5px;top:543px;color:#e81414">V</span>
<div style="left:166px;top:543px;width:72px;height:15px;background:#000;"></div>
<span class="w" style="left:166px;top:543px;color:#ffffff"><span class="t k" style="left:0px">I</span><span class="t d" style="left:8px">1</span><span class="t m" style="left:16px">Ad_min:</span></span>
<div style="left:238px;top:543px;width:56px;height:15px;background:#000;"></div>
<span class="w" style="left:238px;top:543px;color:#2ce62c"><span class="t m" style="left:0px">-</span><span class="t d" style="left:8px">3.</span><span class="t d" style="left:24px">0094</span></span>
<span class="t u2" style="left:302px;top:543px;color:#2ce62c">A</span>
<span class="w" style="left:7px;top:562px;color:#a2aaec"><span class="t dn" style="left:0px">2.</span><span class="t dn" style="left:16px">250</span></span>
<span class="t u" style="left:47px;top:562px;color:#a2aaec">s</span>
<span class="w" style="left:93px;top:562px;color:#a2aaec"><span class="t dn" style="left:0px">2.</span><span class="t dn" style="left:16px">500</span></span>
<span class="t u" style="left:133px;top:562px;color:#a2aaec">s</span>
<span class="w" style="left:193px;top:562px;color:#a2aaec"><span class="t dn" style="left:0px">2.</span><span class="t dn" style="left:16px">750</span></span>
<span class="t u" style="left:233px;top:562px;color:#a2aaec">s</span>
<span class="w" style="left:293px;top:562px;color:#a2aaec"><span class="t dn" style="left:0px">3.</span><span class="t dn" style="left:16px">000</span></span>
<span class="t u" style="left:333px;top:562px;color:#a2aaec">s</span>
<span class="w" style="left:393px;top:562px;color:#a2aaec"><span class="t dn" style="left:0px">3.</span><span class="t dn" style="left:16px">250</span></span>
<span class="t u" style="left:433px;top:562px;color:#a2aaec">s</span>
<span class="w" style="left:493px;top:562px;color:#a2aaec"><span class="t dn" style="left:0px">3.</span><span class="t dn" style="left:16px">500</span></span>
<span class="t u" style="left:533px;top:562px;color:#a2aaec">s</span>
<span class="w" style="left:581px;top:562px;color:#a2aaec"><span class="t dn" style="left:0px">3.</span><span class="t dn" style="left:16px">750</span></span>
<span class="t u" style="left:621px;top:562px;color:#a2aaec">s</span>
<span class="a" style="left:0px;top:583px;color:#ffffff;font-size:12px;font-weight:bold;">Update</span>
<span class="a" style="left:62.5px;top:583px;color:#ffffff;font-size:12px;font-weight:bold;">738 ( 500ms ) 102399 Sum</span>
<span class="a" style="left:511px;top:583px;color:#ffffff;font-size:12px;font-weight:bold;">2022/08/08&nbsp; 09:13:42</span>
<div style="left:637px;top:582px;width:85px;height:14px;background:#fbfbff;overflow:hidden"><span style="position:absolute;left:1.5px;top:6.2px;font:italic bold 16.5px/16px 'Liberation Sans',sans-serif;letter-spacing:-0.3px;white-space:pre"><span style="color:#38b4e4">P</span><span style="color:#3468e0">I</span><span style="color:#3468e0">N</span><span style="color:#24c0c4">G</span><span style="color:#e0246c">Z</span><span style="color:#3474e0">H</span><span style="color:#3474e0">I</span></span><div style="position:absolute;left:68px;top:8.5px;width:8px;height:6px;background:#48c848"></div><div style="position:absolute;left:78px;top:9px;width:7px;height:5px;background:#707070"></div><svg style="position:absolute;left:0;top:0" width="85" height="14" viewBox="0 0 85 14"><path d="M13 6.5Q26 1.5 39 4" fill="none" stroke="#e88a3c" stroke-width="1"/><path d="M38 4.5L40.5 1.5M38.5 1.5L41 4.5" stroke="#e060a0" stroke-width="0.9" fill="none"/></svg></div>
<div style="left:638px;top:67px;width:154px;height:216.5px;background:#22e022;"></div>
<div style="left:641px;top:70px;width:148px;height:210.5px;background:#323059;"></div>
<span class="a" style="left:684px;top:53px;color:#22e022;font-size:15px;font-weight:normal;text-decoration:underline;letter-spacing:0;">ΣA[3V3A]</span>
<span class="a" style="left:685px;top:70.2px;color:#e01424;font-size:12px;font-weight:bold;">U1</span>
<span class="a" style="right:41.5px;top:70.2px;color:#e01424;font-size:12px;font-weight:bold;">150V</span>
<span class="a" style="left:688px;top:86.7px;color:#f020a0;font-size:12px;font-weight:bold;">I1</span>
<span class="a" style="right:41.5px;top:86.7px;color:#e020a0;font-size:12px;font-weight:bold;">5A</span>
<span class="a" style="left:641.5px;top:103.2px;color:#ffffff;font-size:12px;font-weight:bold;">Sync:</span>
<div style="left:683.5px;top:102.2px;width:16.5px;height:16px;background:#e81010;"></div>
<span class="a" style="left:685px;top:103.2px;color:#000000;font-size:12px;font-weight:bold;">U1</span>
<span class="a" style="left:709.5px;top:103.2px;color:#ffffff;font-size:12px;font-weight:bold;">Integ:</span>
<span class="a" style="left:751px;top:103.2px;color:#d81030;font-size:12px;font-weight:bold;">Reset</span>
<span class="a" style="left:685px;top:152.3px;color:#20e020;font-size:12px;font-weight:bold;">U2</span>
<span class="a" style="right:41.5px;top:152.3px;color:#20e020;font-size:12px;font-weight:bold;">150V</span>
<span class="a" style="left:688px;top:168.8px;color:#20e0c0;font-size:12px;font-weight:bold;">I2</span>
<span class="a" style="right:41.5px;top:168.8px;color:#40e0d0;font-size:12px;font-weight:bold;">5A</span>
<span class="a" style="left:641.5px;top:185.3px;color:#ffffff;font-size:12px;font-weight:bold;">Sync:</span>
<div style="left:683.5px;top:184.3px;width:16.5px;height:16px;background:#20e020;"></div>
<span class="a" style="left:685px;top:185.3px;color:#000000;font-size:12px;font-weight:bold;">U2</span>
<span class="a" style="left:709.5px;top:185.3px;color:#ffffff;font-size:12px;font-weight:bold;">Integ:</span>
<span class="a" style="left:751px;top:185.3px;color:#d81030;font-size:12px;font-weight:bold;">Reset</span>
<span class="a" style="left:685px;top:233.5px;color:#e86020;font-size:12px;font-weight:bold;">U3</span>
<span class="a" style="right:41.5px;top:233.5px;color:#e86020;font-size:12px;font-weight:bold;">150V</span>
<span class="a" style="left:688px;top:250.0px;color:#1818e8;font-size:12px;font-weight:bold;">I3</span>
<span class="a" style="right:41.5px;top:250.0px;color:#1818e8;font-size:12px;font-weight:bold;">5A</span>
<span class="a" style="left:641.5px;top:266.5px;color:#ffffff;font-size:12px;font-weight:bold;">Sync:</span>
<div style="left:683.5px;top:265.5px;width:16.5px;height:16px;background:#e86020;"></div>
<span class="a" style="left:685px;top:266.5px;color:#000000;font-size:12px;font-weight:bold;">U3</span>
<span class="a" style="left:709.5px;top:266.5px;color:#ffffff;font-size:12px;font-weight:bold;">Integ:</span>
<span class="a" style="left:751px;top:266.5px;color:#d81030;font-size:12px;font-weight:bold;">Reset</span>
<div style="left:638px;top:310.5px;width:154.5px;height:54.5px;background:#a4bce4;"></div>
<div style="left:639px;top:311.5px;width:152.5px;height:52.5px;background:#134a69;"></div>
<div style="left:680px;top:308px;width:70px;height:6px;background:#134a69;"></div>
<span class="a" style="left:684.5px;top:297.5px;color:#22e022;font-size:12px;font-weight:bold;">Element 4</span>
<span class="a" style="left:685px;top:313px;color:#f4f030;font-size:12px;font-weight:bold;">U4</span>
<span class="a" style="right:41.5px;top:313px;color:#f4f030;font-size:12px;font-weight:bold;">150V</span>
<span class="a" style="left:688px;top:329.5px;color:#ffffa0;font-size:12px;font-weight:bold;">I4</span>
<span class="a" style="right:41.5px;top:329.5px;color:#ffffa0;font-size:12px;font-weight:bold;">5A</span>
<span class="a" style="left:641.5px;top:346px;color:#ffffff;font-size:12px;font-weight:bold;">Sync:</span>
<div style="left:683.5px;top:345px;width:16.5px;height:16px;background:#f8f020;"></div>
<span class="a" style="left:685px;top:346px;color:#000000;font-size:12px;font-weight:bold;">U4</span>
<span class="a" style="left:709.5px;top:346px;color:#ffffff;font-size:12px;font-weight:bold;">Integ:</span>
<span class="a" style="left:751px;top:346px;color:#e81020;font-size:12px;font-weight:bold;">Reset</span>
<div style="left:794px;top:53px;width:1px;height:543px;background:#ffffff;"></div>
<div style="left:795px;top:53px;width:3px;height:543px;background:#e4e4e4;"></div>
<div style="left:795px;top:53px;width:3px;height:90px;background:#b8b8b8;"></div>
<div style="left:795px;top:519px;width:3px;height:27px;background:#b0b0b0;"></div>
<svg style="position:absolute;left:0;top:0" width="798" height="596" viewBox="0 0 798 596"><circle cx="38.7" cy="326.6" r="20.8" fill="rgba(0,0,0,0.28)" stroke="rgba(255,255,255,0.38)" stroke-width="1.8"/><path d="M41.7 319.6L34.7 326.6L41.7 333.6" fill="none" stroke="rgba(255,255,255,0.4)" stroke-width="2"/><circle cx="751" cy="326.5" r="20.8" fill="rgba(0,0,0,0.28)" stroke="rgba(225,225,225,0.72)" stroke-width="1.8"/><path d="M748 319.5L755 326.5L748 333.5" fill="none" stroke="rgba(215,215,215,0.85)" stroke-width="2.4"/></svg>
</div></body></html>
